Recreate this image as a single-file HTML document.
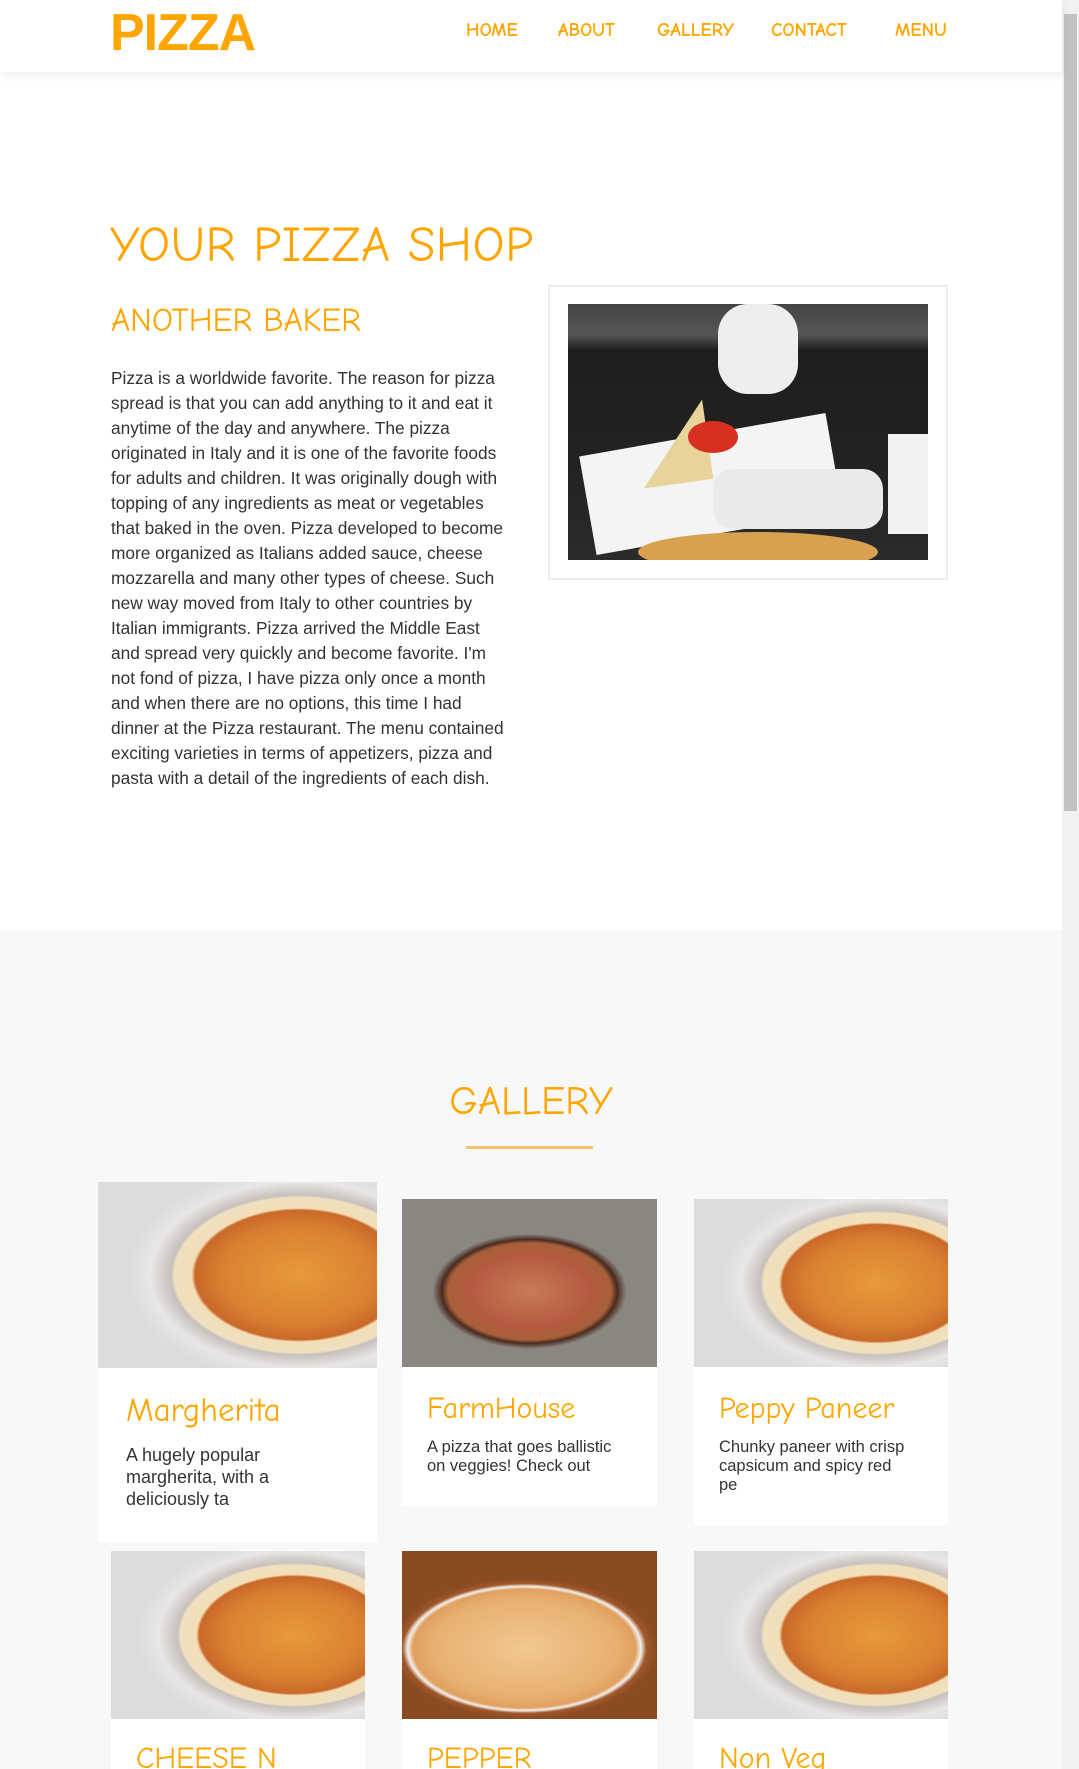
<!DOCTYPE html>
<html><head><meta charset="utf-8"><style>
*{margin:0;padding:0;box-sizing:border-box}
html,body{width:1079px;height:1769px;overflow:hidden;background:#fff}
body{font-family:"Liberation Sans",Arial,sans-serif;position:relative}
.cs{font-family:"Comic Sans MS","Comic Neue",cursive;}
.nav{position:absolute;left:0;top:0;width:1062px;height:72px;background:#fff;box-shadow:0 3px 8px rgba(0,0,0,.07);z-index:2}
.logo{position:absolute;left:110px;top:3px;font-size:52px;font-weight:bold;color:#ffa500;letter-spacing:-1px}
.links a{position:absolute;top:19px;font-size:19px;color:#ffa500;text-decoration:none;font-weight:bold}
.sb{position:absolute;right:0;top:0;width:17px;height:1769px;background:#f1f1f1}
.thumb{position:absolute;right:2px;top:14px;width:13px;height:797px;background:#c1c1c1}
h1{position:absolute;left:110px;top:216px;font-size:50px;font-weight:normal;color:#ffa500;letter-spacing:0.5px}
h2{position:absolute;left:111px;top:302px;font-size:33px;font-weight:normal;color:#ffa500}
.p{position:absolute;left:111px;top:366px;width:402px;font-size:17.3px;line-height:25px;color:#333}
.imgbox{position:absolute;left:548px;top:285px;width:400px;height:295px;border:2px solid #eee;background:#fff}
.hero{position:absolute;left:18px;top:17px;width:360px;height:256px;overflow:hidden;
background:linear-gradient(#444 0,#555 12%,#1e1e1e 18%,#222 60%,#2a2a2a 100%)}
.gal{position:absolute;left:0;top:930px;width:1062px;height:839px;background:#f8f8f8}
.gt{position:absolute;left:0;width:1062px;top:1078px;text-align:center;font-size:40px;color:#ffa500}
.ul{position:absolute;left:466px;top:1146px;width:127px;height:3px;background:#f5c46a}
.card{position:absolute;background:#fff}
.card .im{position:absolute;left:0;top:0;width:100%}
.pz{background:radial-gradient(ellipse 62% 58% at 72% 50%,#e89a3a 0,#d98030 45%,#c9692a 60%,#f2deb6 62%,#efe0c0 72%,#c8c0bc 74%,#e8e6e6 86%,#dcdcdc 100%)}
.fh{background:radial-gradient(ellipse 40% 36% at 50% 55%,#c87a5a 0,#b45a40 60%,#a8603a 80%,#4a2a20 86%,#8a8680 95%),linear-gradient(#445 0,#998 40%,#ccc 100%)}
.pp{background:radial-gradient(ellipse 52% 42% at 48% 58%,#f0c890 0,#e8b070 70%,#e0a060 84%,#f2f0ec 88%,#a0582a 92%,#8a4a22 100%)}
.card h3{position:absolute;font-weight:normal;color:#ffa500;font-size:30px}
.card p{position:absolute;font-size:16.5px;line-height:19px;color:#333}
</style></head><body>
<div class="nav">
<div class="logo">PIZZA</div>
<div class="links cs">
<a style="left:466px">HOME</a><a style="left:558px">ABOUT</a><a style="left:657px">GALLERY</a><a style="left:771px">CONTACT</a><a style="left:895px">MENU</a>
</div></div>
<h1 class="cs">YOUR PIZZA SHOP</h1>
<h2 class="cs">ANOTHER BAKER</h2>
<div class="p">Pizza is a worldwide favorite. The reason for pizza spread is that you can add anything to it and eat it anytime of the day and anywhere. The pizza originated in Italy and it is one of the favorite foods for adults and children. It was originally dough with topping of any ingredients as meat or vegetables that baked in the oven. Pizza developed to become more organized as Italians added sauce, cheese mozzarella and many other types of cheese. Such new way moved from Italy to other countries by Italian immigrants. Pizza arrived the Middle East and spread very quickly and become favorite. I'm not fond of pizza, I have pizza only once a month and when there are no options, this time I had dinner at the Pizza restaurant. The menu contained exciting varieties in terms of appetizers, pizza and pasta with a detail of the ingredients of each dish.</div>
<div class="imgbox"><div class="hero">
<div style="position:absolute;left:18px;top:130px;width:250px;height:100px;background:#f4f4f4;transform:rotate(-10deg)"></div>
<div style="position:absolute;left:70px;top:100px;width:0;height:0;border-left:70px solid transparent;border-right:0 solid transparent;border-bottom:80px solid #e8d49a;transform:rotate(-8deg)"></div>
<div style="position:absolute;left:120px;top:117px;width:50px;height:32px;border-radius:50%;background:#d83020"></div>
<div style="position:absolute;left:150px;top:0;width:80px;height:90px;background:#eee;border-radius:30px"></div>
<div style="position:absolute;left:145px;top:165px;width:170px;height:60px;background:#eaeaea;border-radius:20px"></div>
<div style="position:absolute;left:320px;top:130px;width:40px;height:100px;background:#f2f2f2"></div>
<div style="position:absolute;left:70px;top:228px;width:240px;height:40px;border-radius:50%;background:#d9a050"></div>
</div></div>
<div class="gal"></div>
<div class="gt cs">GALLERY</div>
<div class="ul"></div>

<div class="card" style="left:98px;top:1182px;width:279px;height:360px"><div class="im pz" style="height:186px"></div>
<h3 class="cs" style="left:28px;top:210px;font-size:33px">Margherita</h3>
<p style="left:28px;top:262px;width:170px;font-size:18px;line-height:22px">A hugely popular margherita, with a deliciously ta</p></div>

<div class="card" style="left:402px;top:1199px;width:255px;height:307px"><div class="im fh" style="height:168px"></div>
<h3 class="cs" style="left:25px;top:192px">FarmHouse</h3>
<p style="left:25px;top:239px;width:205px">A pizza that goes ballistic on veggies! Check out</p></div>

<div class="card" style="left:694px;top:1199px;width:254px;height:326px"><div class="im pz" style="height:168px"></div>
<h3 class="cs" style="left:25px;top:192px">Peppy Paneer</h3>
<p style="left:25px;top:239px;width:188px">Chunky paneer with crisp capsicum and spicy red pe</p></div>

<div class="card" style="left:111px;top:1551px;width:254px;height:240px"><div class="im pz" style="height:168px"></div>
<h3 class="cs" style="left:25px;top:190px">CHEESE N</h3></div>
<div class="card" style="left:402px;top:1551px;width:255px;height:240px"><div class="im pp" style="height:168px"></div>
<h3 class="cs" style="left:25px;top:190px">PEPPER</h3></div>
<div class="card" style="left:694px;top:1551px;width:254px;height:240px"><div class="im pz" style="height:168px"></div>
<h3 class="cs" style="left:25px;top:190px">Non Veg</h3></div>

<div class="sb"><div class="thumb"></div></div>
</body></html>
